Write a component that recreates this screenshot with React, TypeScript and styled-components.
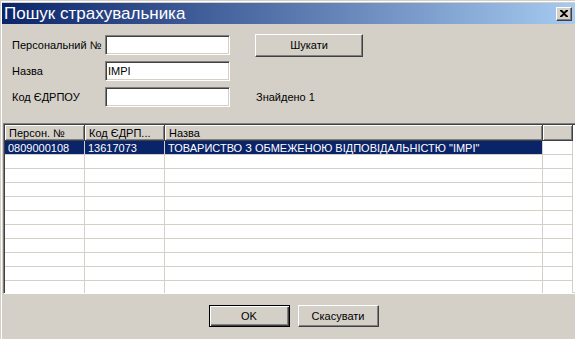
import styled, {createGlobalStyle} from "styled-components";
import React from "react";

const GlobalStyle = createGlobalStyle`
    html, body {
        margin: 0;
        padding: 0;
        background: #d4d0c8;
    }
    body {
        font-family: "Liberation Sans", Arial, sans-serif;
        font-size: 11px;
        color: #000;
    }
`;

const Window = styled.div`
    width: 575px;
    height: 339px;
    box-sizing: border-box;
    padding: 3px 0 0 2px;
    background: #d4d0c8;
    box-shadow: inset 1px 1px 0 #d4d0c8, inset 2px 2px 0 #fff;
    overflow: hidden;
    display: flex;
    flex-direction: column;
`;

const TitleBar = styled.div`
    height: 21px;
    flex-shrink: 0;
    display: flex;
    align-items: center;
    justify-content: space-between;
    padding: 0 3px 0 2px;
    background: linear-gradient(to right, #0a246a, #a6caf0);
    color: #fff;
    font-size: 17px;
`;

const CloseButton = styled.div`
    width: 16px;
    height: 14px;
    box-sizing: border-box;
    background: #d4d0c8;
    border: 1px solid;
    border-color: #fff #404040 #404040 #fff;
    box-shadow: inset -1px -1px 0 #808080;
    display: flex;
    align-items: center;
    justify-content: center;
`;

const Form = styled.div`
    display: flex;
    flex-direction: column;
    gap: 6px;
    padding: 11px 0 0 10px;
`;

const FormRow = styled.div`
    display: flex;
    align-items: center;
    height: 20px;
`;

const Label = styled.span`
    width: 93px;
`;

const Field = styled.input`
    width: 125px;
    height: 20px;
    box-sizing: border-box;
    margin: 0;
    padding: 0 2px;
    font: inherit;
    background: #fff;
    border: 1px solid;
    border-color: #808080 #fff #fff #808080;
    box-shadow: inset 1px 1px 0 #404040, inset -1px -1px 0 #d4d0c8;
    outline: none;
`;

const Button = styled.div<{ $width: number; $height: number; $default?: boolean }>`
    width: ${p => p.$width}px;
    height: ${p => p.$height}px;
    box-sizing: border-box;
    display: flex;
    align-items: center;
    justify-content: center;
    background: #d4d0c8;
    border: 1px solid;
    border-color: ${p => p.$default ? "#000" : "#fff #404040 #404040 #fff"};
    box-shadow: ${p => p.$default
        ? "inset 1px 1px 0 #fff, inset -1px -1px 0 #404040, inset -2px -2px 0 #808080"
        : "inset -1px -1px 0 #808080, inset 1px 1px 0 #d4d0c8"};
`;

const SearchSlot = styled.div`
    margin-left: 25px;
`;

const Found = styled.span`
    margin-left: 26px;
`;

const Grid = styled.div`
    margin: 16px 0 0 1px;
    width: 580px;
    height: 171px;
    flex-shrink: 0;
    box-sizing: border-box;
    background: #fff;
    border: 1px solid;
    border-color: #808080 #fff #fff #808080;
    box-shadow: inset 1px 1px 0 #404040, inset -1px -1px 0 #d4d0c8;
    padding: 1px 0 0 1px;
    overflow: hidden;
`;

const GridRow = styled.div`
    display: flex;
`;

const HeadCell = styled.div<{ $width: number }>`
    width: ${p => p.$width}px;
    flex-shrink: 0;
    height: 16px;
    box-sizing: border-box;
    padding: 0 0 0 4px;
    display: flex;
    align-items: center;
    background: #d4d0c8;
    border-right: 1px solid #404040;
    border-bottom: 1px solid #404040;
    box-shadow: inset 1px 1px 0 #fff, inset -1px -1px 0 #808080;
    white-space: nowrap;
    overflow: hidden;
`;

const Cell = styled.div<{ $width: number; $selected?: boolean }>`
    width: ${p => p.$width}px;
    flex-shrink: 0;
    height: 14px;
    box-sizing: border-box;
    padding: 0 0 0 3px;
    display: flex;
    align-items: center;
    background: ${p => p.$selected ? "#0a246a" : "#fff"};
    color: ${p => p.$selected ? "#fff" : "#000"};
    border-right: 1px solid #d4d0c8;
    border-bottom: 1px solid #d4d0c8;
    white-space: nowrap;
    overflow: hidden;
`;

const Footer = styled.div`
    display: flex;
    justify-content: center;
    gap: 8px;
    padding: 11px 0 0 10px;
`;

const columns = [
    {title: "Персон. №", width: 80},
    {title: "Код ЄДРП...", width: 80},
    {title: "Назва", width: 378},
    {title: "", width: 30},
];

const rows: string[][] = [
    ["0809000108", "13617073", "ТОВАРИСТВО З ОБМЕЖЕНОЮ ВІДПОВІДАЛЬНІСТЮ \"ІМРІ\""],
    ...Array.from({length: 10}, () => ["", "", ""]),
];

const App: React.FC = () => {
    return (
        <Window>
            <GlobalStyle/>
            <TitleBar>
                Пошук страхувальника
                <CloseButton>
                    <svg width="8" height="7" viewBox="0 0 8 7">
                        <path d="M0 0h2l2 2 2-2h2v1L5 3.5 8 6v1H6L4 5 2 7H0V6l3-2.5L0 1z" fill="#000"/>
                    </svg>
                </CloseButton>
            </TitleBar>
            <Form>
                <FormRow>
                    <Label>Персональний №</Label>
                    <Field defaultValue=""/>
                    <SearchSlot>
                        <Button $width={108} $height={23}>Шукати</Button>
                    </SearchSlot>
                </FormRow>
                <FormRow>
                    <Label>Назва</Label>
                    <Field defaultValue="IMPI"/>
                </FormRow>
                <FormRow>
                    <Label>Код ЄДРПОУ</Label>
                    <Field defaultValue=""/>
                    <Found>Знайдено 1</Found>
                </FormRow>
            </Form>
            <Grid>
                <GridRow>
                    {columns.map((c, i) => (
                        <HeadCell key={i} $width={c.width}>{c.title}</HeadCell>
                    ))}
                </GridRow>
                {rows.map((r, ri) => (
                    <GridRow key={ri}>
                        {columns.map((c, ci) => (
                            <Cell key={ci} $width={c.width} $selected={ri === 0 && ci < 3}>
                                {r[ci] ?? ""}
                            </Cell>
                        ))}
                    </GridRow>
                ))}
            </Grid>
            <Footer>
                <Button $width={81} $height={22} $default>OK</Button>
                <Button $width={81} $height={22}>Скасувати</Button>
            </Footer>
        </Window>
    );
};

export default App;
